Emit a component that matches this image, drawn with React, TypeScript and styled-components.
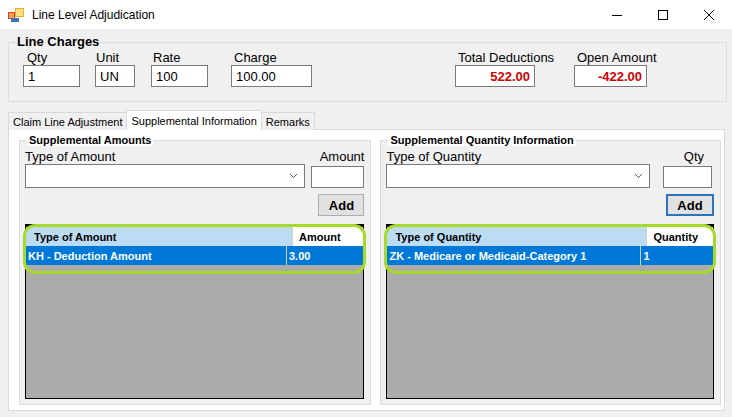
import styled, { createGlobalStyle } from 'styled-components';

const Global = createGlobalStyle`
  body { margin: 0; background: #f0f0f0; font-family: "Liberation Sans", Arial, sans-serif; }
`;

const Window = styled.div`
  width: 732px;
  height: 417px;
  display: flex;
  flex-direction: column;
  overflow: hidden;
`;

const TitleBar = styled.div`
  height: 29px;
  background: #fff;
  display: flex;
  align-items: center;
  padding-left: 8px;
  font-size: 12px;
  color: #000;
`;

const TitleText = styled.span`
  margin-left: 8px;
  flex: 1;
`;

const WinBtn = styled.div`
  width: 46px;
  height: 29px;
  display: flex;
  align-items: center;
  justify-content: center;
`;

const Body = styled.div`
  flex: 1;
  padding: 7px 5px 0 8px;
  display: flex;
  flex-direction: column;
`;

const ChargesBox = styled.fieldset`
  margin: 0;
  height: 66px;
  box-sizing: border-box;
  border: 1px solid #dcdcdc;
  padding: 2px 0 0 14px;
  display: flex;
  align-items: flex-start;
`;

const ChargesLegend = styled.legend`
  font-weight: bold;
  font-size: 13px;
  padding: 0;
  margin-left: -6px;
  line-height: 12px;
`;

const Field = styled.div<{ $ml?: number; $mr?: number; $w?: number }>`
  display: flex;
  flex-direction: column;
  margin-left: ${p => p.$ml ?? 0}px;
  margin-right: ${p => p.$mr ?? 0}px;
  ${p => (p.$w ? `width: ${p.$w}px;` : '')}
  font-size: 13px;
  white-space: nowrap;
`;

const FieldLabel = styled.span<{ $indent?: number }>`
  padding-left: ${p => p.$indent ?? 3}px;
  line-height: 15px;
`;

const Input = styled.div<{ $w: number; $red?: boolean }>`
  width: ${p => p.$w}px;
  height: 22px;
  box-sizing: border-box;
  background: #fff;
  border: 1px solid #7a7a7a;
  font-size: 13px;
  padding: 3px 4px;
  text-align: ${p => (p.$red ? 'right' : 'left')};
  color: ${p => (p.$red ? '#d40000' : '#000')};
  font-weight: ${p => (p.$red ? 'bold' : 'normal')};
`;

const Spacer = styled.div`
  flex: 1;
`;

const TabStrip = styled.div`
  display: flex;
  align-items: flex-end;
  margin-top: 8px;
  height: 20px;
  font-size: 11px;
`;

const Tab = styled.div<{ $active?: boolean }>`
  height: ${p => (p.$active ? 20 : 18)}px;
  box-sizing: border-box;
  padding: 0 4px;
  display: flex;
  align-items: center;
  border: 1px solid #d9d9d9;
  border-bottom: none;
  background: ${p => (p.$active ? '#fff' : '#f0f0f0')};
  margin-left: -1px;
  &:first-child { margin-left: 0; }
  position: relative;
  z-index: ${p => (p.$active ? 1 : 0)};
`;

const Panel = styled.div`
  width: 717px;
  height: 282px;
  box-sizing: border-box;
  background: #fff;
  border: 1px solid #d9d9d9;
  margin-top: -1px;
  padding: 5px 3px 5px 10px;
  display: flex;
  gap: 9px;
`;

const Group = styled.fieldset<{ $w: number }>`
  margin: 0;
  width: ${p => p.$w}px;
  box-sizing: border-box;
  border: 1px solid #dcdcdc;
  background: #f0f0f0;
  padding: 3px 6px 5px 5px;
  display: flex;
  flex-direction: column;
`;

const GroupLegend = styled.legend`
  font-weight: bold;
  font-size: 11px;
  padding: 0 2px;
  margin-left: 2px;
  background: #fff;
  line-height: 11px;
`;

const Row = styled.div`
  display: flex;
  align-items: flex-end;
  justify-content: space-between;
  font-size: 13px;
`;

const Combo = styled.div<{ $w: number }>`
  width: ${p => p.$w}px;
  height: 24px;
  box-sizing: border-box;
  background: #fff;
  border: 1px solid #7a7a7a;
  display: flex;
  align-items: center;
  justify-content: flex-end;
  padding-right: 6px;
`;

const AddBtn = styled.div<{ $focus?: boolean }>`
  align-self: flex-end;
  margin-top: 6px;
  width: ${p => (p.$focus ? 48 : 46)}px;
  height: 22px;
  box-sizing: border-box;
  border: ${p => (p.$focus ? '2px solid #2b74bd' : '1px solid #adadad')};
  background: #e1e1e1;
  font-weight: bold;
  font-size: 13px;
  display: flex;
  align-items: center;
  justify-content: center;
`;

const Grid = styled.div`
  margin-top: 8px;
  flex: 1;
  background: #ababab;
  border: 1px solid #000;
  border-top-width: 3px;
  position: relative;
  font-size: 11px;
  font-weight: bold;
`;

const GridRow = styled.div<{ $head?: boolean }>`
  display: flex;
  height: 19px;
  background: ${p => (p.$head ? '#bcdcf4' : '#0078d7')};
  color: ${p => (p.$head ? '#000' : '#fff')};
`;

const Cell = styled.div<{ $w?: number; $head?: boolean; $pad?: number }>`
  ${p => (p.$w ? `width: ${p.$w}px;` : 'flex: 1;')}
  display: flex;
  align-items: center;
  padding-left: ${p => p.$pad ?? 2}px;
  border-left: ${p => (p.$w ? 'none' : '1px solid #d0d0d0')};
  background: ${p => (p.$head && !p.$w ? '#fff' : 'transparent')};
`;

const Highlight = styled.div`
  position: absolute;
  left: -3px;
  right: -3px;
  top: -3px;
  height: 44px;
  border: 3px solid #a6d92a;
  border-radius: 12px;
  pointer-events: none;
`;

const Chevron = () => (
  <svg width="9" height="6" viewBox="0 0 9 6">
    <path d="M1 1 L4.5 4.5 L8 1" stroke="#555" fill="none" strokeWidth="1" />
  </svg>
);

export default function App() {
  return (
    <Window>
      <Global />
      <TitleBar>
        <svg width="16" height="14" viewBox="0 0 16 14">
          <rect x="0" y="4" width="7" height="7" fill="#d04020" />
          <rect x="1" y="5" width="5" height="5" fill="#f0a050" />
          <rect x="7" y="0" width="9" height="9" fill="#e8b030" />
          <rect x="8" y="1" width="7" height="7" fill="#fce080" />
          <rect x="3" y="10" width="8" height="4" fill="#4070c0" />
        </svg>
        <TitleText>Line Level Adjudication</TitleText>
        <WinBtn>
          <svg width="10" height="10"><path d="M0 5.5 H10" stroke="#000" /></svg>
        </WinBtn>
        <WinBtn>
          <svg width="10" height="10"><rect x="0.5" y="0.5" width="9" height="9" stroke="#000" fill="none" /></svg>
        </WinBtn>
        <WinBtn>
          <svg width="10" height="10"><path d="M0 0 L10 10 M10 0 L0 10" stroke="#000" /></svg>
        </WinBtn>
      </TitleBar>
      <Body>
        <ChargesBox>
          <ChargesLegend>Line Charges</ChargesLegend>
          <Field>
            <FieldLabel $indent={4}>Qty</FieldLabel>
            <Input $w={57}>1</Input>
          </Field>
          <Field $ml={15}>
            <FieldLabel $indent={1}>Unit</FieldLabel>
            <Input $w={40}>UN</Input>
          </Field>
          <Field $ml={16}>
            <FieldLabel $indent={2}>Rate</FieldLabel>
            <Input $w={57}>100</Input>
          </Field>
          <Field $ml={23}>
            <FieldLabel $indent={3}>Charge</FieldLabel>
            <Input $w={81}>100.00</Input>
          </Field>
          <Spacer />
          <Field $w={80}>
            <FieldLabel $indent={3}>Total Deductions</FieldLabel>
            <Input $w={80} $red>522.00</Input>
          </Field>
          <Field $w={73} $ml={39} $mr={79}>
            <FieldLabel $indent={3}>Open Amount</FieldLabel>
            <Input $w={73} $red>-422.00</Input>
          </Field>
        </ChargesBox>
        <TabStrip>
          <Tab>Claim Line Adjustment</Tab>
          <Tab $active>Supplemental Information</Tab>
          <Tab>Remarks</Tab>
        </TabStrip>
        <Panel>
          <Group $w={354}>
            <GroupLegend>Supplemental Amounts</GroupLegend>
            <Row>
              <span>Type of Amount</span>
              <span>Amount</span>
            </Row>
            <Row>
              <Combo $w={280}><Chevron /></Combo>
              <Input $w={53} />
            </Row>
            <AddBtn>Add</AddBtn>
            <Grid>
              <GridRow $head>
                <Cell $w={258} $pad={8}>Type of Amount</Cell>
                <Cell $head $pad={6}>Amount</Cell>
              </GridRow>
              <GridRow>
                <Cell $w={258}>KH - Deduction Amount</Cell>
                <Cell>3.00</Cell>
              </GridRow>
              <Highlight />
            </Grid>
          </Group>
          <Group $w={342}>
            <GroupLegend>Supplemental Quantity Information</GroupLegend>
            <Row>
              <span>Type of Quantity</span>
              <span style={{ marginRight: 10 }}>Qty</span>
            </Row>
            <Row>
              <Combo $w={264}><Chevron /></Combo>
              <Input $w={49} style={{ marginRight: 2 }} />
            </Row>
            <AddBtn $focus>Add</AddBtn>
            <Grid>
              <GridRow $head>
                <Cell $w={251} $pad={8}>Type of Quantity</Cell>
                <Cell $head $pad={6}>Quantity</Cell>
              </GridRow>
              <GridRow>
                <Cell $w={251}>ZK - Medicare or Medicaid-Category 1</Cell>
                <Cell>1</Cell>
              </GridRow>
              <Highlight />
            </Grid>
          </Group>
        </Panel>
      </Body>
    </Window>
  );
}
